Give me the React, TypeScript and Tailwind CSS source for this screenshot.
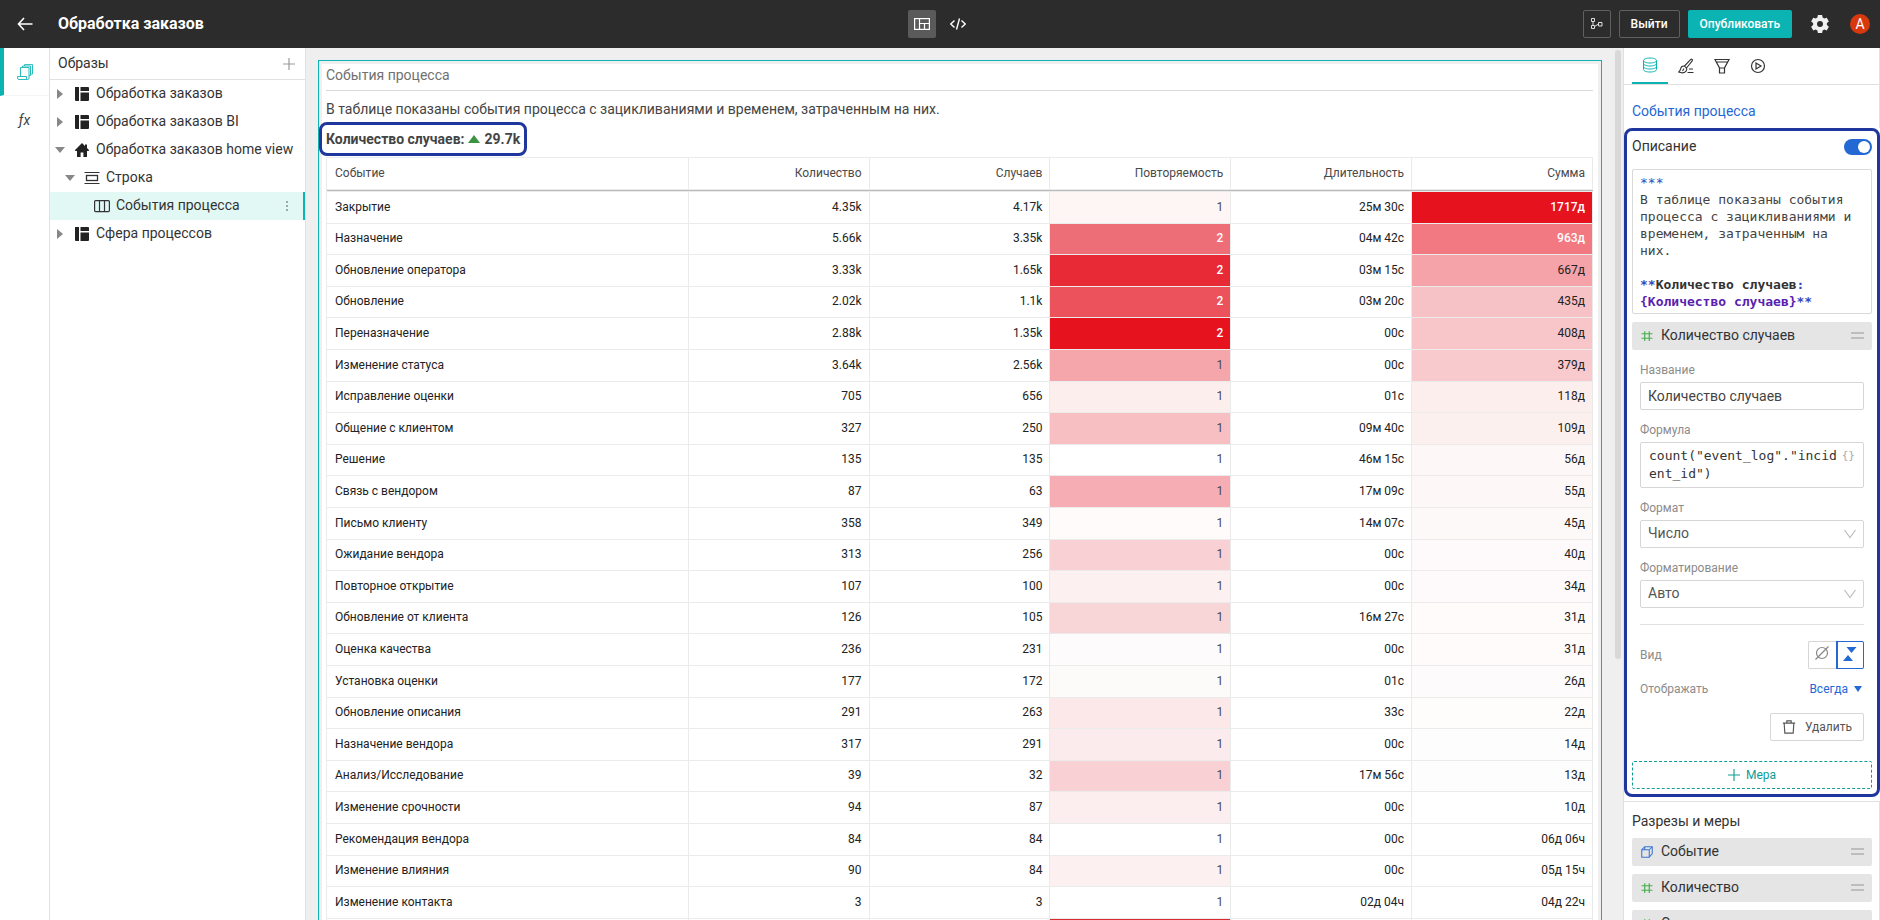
import type { ReactNode } from "react";

type Row = {
  name: string;
  count: string;
  cases: string;
  repeat: string;
  repeatTone: string;
  duration: string;
  total: string;
  totalTone: string;
};

const light = "text-[#4a4a4a]";
const strong = "font-medium text-white";

const rows: Row[] = [
  { name: "Закрытие", count: "4.35k", cases: "4.17k", repeat: "1", repeatTone: `bg-[#fef5f5] ${light}`, duration: "25м 30с", total: "1717д", totalTone: `bg-[#e6131f] ${strong}` },
  { name: "Назначение", count: "5.66k", cases: "3.35k", repeat: "2", repeatTone: `bg-[#ee6e77] ${strong}`, duration: "04м 42с", total: "963д", totalTone: `bg-[#f27981] ${strong}` },
  { name: "Обновление оператора", count: "3.33k", cases: "1.65k", repeat: "2", repeatTone: `bg-[#e82a36] ${strong}`, duration: "03м 15с", total: "667д", totalTone: "bg-[#f5a2a8]" },
  { name: "Обновление", count: "2.02k", cases: "1.1k", repeat: "2", repeatTone: `bg-[#ec525b] ${strong}`, duration: "03м 20с", total: "435д", totalTone: "bg-[#f7c2c5]" },
  { name: "Переназначение", count: "2.88k", cases: "1.35k", repeat: "2", repeatTone: `bg-[#e6131f] ${strong}`, duration: "00с", total: "408д", totalTone: "bg-[#f8c6c9]" },
  { name: "Изменение статуса", count: "3.64k", cases: "2.56k", repeat: "1", repeatTone: `bg-[#f5a6ab] ${light}`, duration: "00с", total: "379д", totalTone: "bg-[#f8cacd]" },
  { name: "Исправление оценки", count: "705", cases: "656", repeat: "1", repeatTone: `bg-[#fdeeee] ${light}`, duration: "01с", total: "118д", totalTone: "bg-[#fdeeee]" },
  { name: "Общение с клиентом", count: "327", cases: "250", repeat: "1", repeatTone: `bg-[#f7bfc2] ${light}`, duration: "09м 40с", total: "109д", totalTone: "bg-[#fcf0ef]" },
  { name: "Решение", count: "135", cases: "135", repeat: "1", repeatTone: light, duration: "46м 15с", total: "56д", totalTone: "bg-[#fdf7f7]" },
  { name: "Связь с вендором", count: "87", cases: "63", repeat: "1", repeatTone: `bg-[#f6adb4] ${light}`, duration: "17м 09с", total: "55д", totalTone: "bg-[#fdf7f7]" },
  { name: "Письмо клиенту", count: "358", cases: "349", repeat: "1", repeatTone: `bg-[#fffbfb] ${light}`, duration: "14м 07с", total: "45д", totalTone: "bg-[#fdf9f9]" },
  { name: "Ожидание вендора", count: "313", cases: "256", repeat: "1", repeatTone: `bg-[#f9d0d3] ${light}`, duration: "00с", total: "40д", totalTone: "bg-[#fefafb]" },
  { name: "Повторное открытие", count: "107", cases: "100", repeat: "1", repeatTone: `bg-[#fcf0f0] ${light}`, duration: "00с", total: "34д", totalTone: "bg-[#fefafb]" },
  { name: "Обновление от клиента", count: "126", cases: "105", repeat: "1", repeatTone: `bg-[#f8d6d8] ${light}`, duration: "16м 27с", total: "31д", totalTone: "bg-[#fffbfa]" },
  { name: "Оценка качества", count: "236", cases: "231", repeat: "1", repeatTone: `bg-[#fefbfc] ${light}`, duration: "00с", total: "31д", totalTone: "bg-[#fffbfa]" },
  { name: "Установка оценки", count: "177", cases: "172", repeat: "1", repeatTone: `bg-[#fdfafa] ${light}`, duration: "01с", total: "26д", totalTone: "bg-[#fefbfc]" },
  { name: "Обновление описания", count: "291", cases: "263", repeat: "1", repeatTone: `bg-[#fce8e9] ${light}`, duration: "33с", total: "22д", totalTone: "bg-[#fffdfc]" },
  { name: "Назначение вендора", count: "317", cases: "291", repeat: "1", repeatTone: `bg-[#fcebec] ${light}`, duration: "00с", total: "14д", totalTone: "bg-[#fefdfd]" },
  { name: "Анализ/Исследование", count: "39", cases: "32", repeat: "1", repeatTone: `bg-[#f9d1d5] ${light}`, duration: "17м 56с", total: "13д", totalTone: "bg-[#fefdfd]" },
  { name: "Изменение срочности", count: "94", cases: "87", repeat: "1", repeatTone: `bg-[#fceeef] ${light}`, duration: "00с", total: "10д", totalTone: "" },
  { name: "Рекомендация вендора", count: "84", cases: "84", repeat: "1", repeatTone: light, duration: "00с", total: "06д 06ч", totalTone: "" },
  { name: "Изменение влияния", count: "90", cases: "84", repeat: "1", repeatTone: `bg-[#fcf1f0] ${light}`, duration: "00с", total: "05д 15ч", totalTone: "" },
  { name: "Изменение контакта", count: "3", cases: "3", repeat: "1", repeatTone: light, duration: "02д 04ч", total: "04д 22ч", totalTone: "" },
  { name: "", count: "", cases: "", repeat: "", repeatTone: "bg-[#dc2a35]", duration: "", total: "", totalTone: "" },
];

function Icon({ size = 16, className = "", children }: { size?: number; className?: string; children: ReactNode }) {
  return (
    <svg width={size} height={size} viewBox="0 0 16 16" fill="none" stroke="currentColor" aria-hidden="true" className={`shrink-0 ${className}`}>
      {children}
    </svg>
  );
}

const LayoutIcon = () => (
  <Icon className="text-[#222]">
    <path d="M1 1h4v14H2a1 1 0 0 1-1-1zM6.5 1H14a1 1 0 0 1 1 1v3H6.5zM6.5 6.5H15V14a1 1 0 0 1-1 1H6.5z" fill="currentColor" stroke="none" />
  </Icon>
);

const HomeIcon = () => (
  <Icon className="text-[#222]">
    <path d="M8 1 .8 8.2l.7.8H3v6h3.6v-4.5h2.8V15H13V9h1.500l.7-.8L13 6V2.500h-2V4z" fill="currentColor" stroke="none" />
  </Icon>
);

const RowIcon = () => (
  <Icon className="text-[#333]">
    <path d="M.5 2.500h15M.5 13.500h15" strokeWidth="1.200" />
    <rect x="2.500" y="5.500" width="11" height="5" strokeWidth="1.300" />
  </Icon>
);

const TableIcon = () => (
  <Icon className="text-[#333]">
    <rect x=".6" y="2.600" width="14.800" height="11" rx="1" strokeWidth="1.200" />
    <path d="M5.500 2.500v11M10.500 2.500v11" strokeWidth="1.200" />
  </Icon>
);

const HashIcon = () => (
  <Icon size={12} className="text-[#43ad4a]">
    <path d="M5 1.500v13M11 1.500v13M.8 5h14.400M.8 11h14.400" strokeWidth="1.500" />
  </Icon>
);

const CubeIcon = () => (
  <Icon size={12} className="text-[#3a74d0]">
    <path d="M1 5h10v10H1zM1 5l4-4h10v9l-4 5M11 5l4-4M5 1v4" strokeWidth="1.400" />
  </Icon>
);

const Grip = () => (
  <svg width="13" height="8" viewBox="0 0 13 8" aria-hidden="true" className="text-[#bdbdbd]">
    <path d="M0 1h13M0 6h13" stroke="currentColor" strokeWidth="2" />
  </svg>
);

function Caret({ open }: { open?: boolean }) {
  return (
    <svg width="10" height="10" viewBox="0 0 10 10" aria-hidden="true" className="shrink-0 text-[#888]">
      <path d={open ? "M0 2h10L5 8z" : "M2 0v10l6-5z"} fill="currentColor" />
    </svg>
  );
}

function TreeRow({ indent = "pl-[5px]", open, leaf, icon, label, selected }: { indent?: string; open?: boolean; leaf?: boolean; icon: ReactNode; label: string; selected?: boolean }) {
  return (
    <li>
      <button
        type="button"
        className={`flex h-7 w-full items-center pr-[14px] text-left text-sm text-[#333] ${indent} ${selected ? "border-r-2 border-[#0cb3b3] bg-[#e1f8f5]" : ""}`}
      >
        {!leaf && <Caret open={open} />}
        <span className={`mr-[6px] ${leaf ? "" : "ml-[9px]"}`}>{icon}</span>
        <span className="flex-1 pb-0.5 whitespace-nowrap">{label}</span>
        {selected && (
          <svg width="4" height="12" viewBox="0 0 4 12" aria-hidden="true" className="text-[#9aaba9]">
            <path d="M1 1h2v2H1zM1 5h2v2H1zM1 9h2v2H1z" fill="currentColor" />
          </svg>
        )}
      </button>
    </li>
  );
}

function Chip({ icon, label }: { icon: ReactNode; label: string }) {
  return (
    <button type="button" className="flex h-7 w-full items-center rounded-xs bg-[#e5e5e5] pr-2 pl-[9px] text-left text-sm text-[#333]">
      {icon}
      <span className="ml-2 flex-1 pb-0.5">{label}</span>
      <Grip />
    </button>
  );
}

function SelectField({ id, label, value }: { id: string; label: string; value: string }) {
  return (
    <div className="mt-2.5 flex flex-col gap-0.5">
      <label htmlFor={id} className="text-[12px] leading-5 text-[#8c8c8c]">{label}</label>
      <div className="grid">
        <select id={id} defaultValue={value} className="col-start-1 row-start-1 h-7 appearance-none rounded-xs border border-[#d6d6d6] bg-white px-[7px] pb-0.5 text-sm text-[#555]">
          <option>{value}</option>
        </select>
        <svg width="12" height="10" viewBox="0 0 12 10" fill="none" aria-hidden="true" className="pointer-events-none col-start-1 row-start-1 mr-2 self-center justify-self-end text-[#bbb]">
          <path d="M.5 1 6 8.500 11.500 1" stroke="currentColor" strokeWidth="1.200" />
        </svg>
      </div>
    </div>
  );
}

function Header() {
  return (
    <header className="grid h-12 shrink-0 grid-cols-[1fr_auto_1fr] items-center bg-[#2c2c2c] text-white">
      <div className="flex items-center">
        <button type="button" aria-label="Назад" className="ml-[17px]">
          <Icon>
            <path d="M7 2 1.500 8 7 14M1.500 8H15.500" strokeWidth="1.600" />
          </Icon>
        </button>
        <h1 className="ml-[25px] text-base font-bold">Обработка заказов</h1>
      </div>
      <div className="flex items-center gap-2">
        <button type="button" aria-label="Макет" className="flex h-7 w-7 items-center justify-center rounded-xs bg-[#5a5a5a]">
          <Icon>
            <rect x=".6" y="2.600" width="14.800" height="10.800" strokeWidth="1.200" />
            <path d="M5.500 3v10M5.500 7.500h10M10.500 7.500V13" strokeWidth="1.200" />
          </Icon>
        </button>
        <button type="button" aria-label="Код" className="flex h-7 w-7 items-center justify-center">
          <Icon>
            <path d="M4.500 4.500.8 8l3.700 3.500M11.500 4.500 15.200 8l-3.700 3.500M9.500 2.500l-3 11" strokeWidth="1.400" />
          </Icon>
        </button>
      </div>
      <div className="flex items-center justify-end pr-2.5">
        <button type="button" aria-label="Связи" className="flex h-7 w-7 items-center justify-center rounded-xs border border-[#606060] pb-0.5">
          <svg width="13" height="13" viewBox="0 0 13 13" fill="none" stroke="#ddd" aria-hidden="true">
            <path d="M1.500 1.500h3v3h-3zM1.500 8.500h3v3h-3zM8.500 5.500h3.500v3.500H8.500zM3 4.500v4M4.500 9.500 8.500 7" />
          </svg>
        </button>
        <button type="button" className="ml-2 h-7 rounded-xs border border-[#606060] px-[11px] text-[12px] font-medium">Выйти</button>
        <button type="button" className="ml-2 h-7 rounded-xs bg-[#0cb3b3] px-3 text-[12px] font-medium">Опубликовать</button>
        <button type="button" aria-label="Настройки" className="ml-[19px]">
          <svg width="18" height="18" viewBox="0 0 24 24" fill="#f0f0f0" aria-hidden="true">
            <path fillRule="evenodd" d="M9.200 0h5.600l.7 3.400 2.200 1.300 3.300-1.100 2.800 4.900-2.600 2.300v2.500l2.600 2.300-2.800 4.900-3.300-1.100-2.200 1.300-.7 3.300H9.200l-.7-3.300-2.200-1.300L3 20.500.2 15.600l2.600-2.300v-2.500L.2 8.500 3 3.600l3.300 1.100 2.200-1.300zM12 8a4 4 0 1 0 0 8 4 4 0 0 0 0-8z" />
          </svg>
        </button>
        <button type="button" aria-label="Профиль" className="ml-[21px] flex h-5 w-5 items-center justify-center rounded-full bg-[#d8380e] text-sm">A</button>
      </div>
    </header>
  );
}

function Sidebar() {
  return (
    <div className="flex shrink-0">
      <nav className="flex w-[50px] flex-col border-r border-[#e2e2e2] bg-white">
        <button type="button" aria-label="Образы" className="flex h-12 items-center border-b border-l-4 border-b-[#f5f5f5] border-l-[#0cb3b3] pl-[13px] text-[#2bbcbc]">
          <Icon>
            <path d="M3.500 12.500V3.500h8.500V14a1.500 1.500 0 0 1-1.500 1.500H2A1.500 1.500 0 0 1 .6 14v-1.500h8.900V14a1.500 1.500 0 0 0 1 1.500M5.500 3.500v-1.500h8v9.500H12M7.500 2V.600h8v9.400h-2" />
          </Icon>
        </button>
        <button type="button" aria-label="Функции" className="h-12 text-sm text-[#444] italic">ƒx</button>
      </nav>
      <aside className="flex w-64 flex-col border-r border-[#e2e2e2] bg-white">
        <div className="flex h-8 shrink-0 items-center justify-between border-b border-[#e2e2e2] pr-[10px] pl-2">
          <h2 className="pb-0.5 text-sm text-[#333]">Образы</h2>
          <button type="button" aria-label="Добавить" className="text-[#999]">
            <Icon size={12}>
              <path d="M8 0v16M0 8h16" strokeWidth="1.600" />
            </Icon>
          </button>
        </div>
        <ul>
          <TreeRow icon={<LayoutIcon />} label="Обработка заказов" />
          <TreeRow icon={<LayoutIcon />} label="Обработка заказов BI" />
          <TreeRow open icon={<HomeIcon />} label="Обработка заказов home view" />
          <TreeRow indent="pl-[15px]" open icon={<RowIcon />} label="Строка" />
          <TreeRow indent="pl-11" leaf selected icon={<TableIcon />} label="События процесса" />
          <TreeRow icon={<LayoutIcon />} label="Сфера процессов" />
        </ul>
      </aside>
    </div>
  );
}

function EventsCard() {
  const first = "border-r border-b border-[#ebebeb] px-2 pb-0.5";
  const cell = "border-r border-b border-[#ebebeb] px-[7px] pb-0.5 text-right";
  const head = "h-[33px] border-t border-r border-b border-[#ebebeb] px-[7px] pb-0.5 text-right font-normal text-[#4a4a4a]";
  return (
    <article className="min-w-0 flex-1 self-start border border-[#0cb3b3] p-[3px]">
      <div className="bg-white pr-[5px] pl-1 text-[#444]">
        <h2 className="h-[27px] border-b border-[#d9d9d9] text-sm leading-[22px] text-[#707070]">События процесса</h2>
        <p className="mt-2 text-sm leading-5">В таблице показаны события процесса с зацикливаниями и временем, затраченным на них.</p>
        <p className="mt-[3px] -ml-[7px] inline-flex h-[34px] items-center rounded-lg border-[3px] border-[#1f369c] bg-white px-1 text-sm font-bold">
          Количество случаев:
          <svg width="12" height="8" viewBox="0 0 12 8" aria-hidden="true" className="mr-[5px] ml-[3px]">
            <path d="M6 0 12 8H0z" fill="#3c9442" />
          </svg>
          29.7k
        </p>
        <table className="mt-px w-full table-fixed border-separate border-spacing-0 border-l border-[#ebebeb] text-[12px]">
          <colgroup>
            <col className="w-2/7" />
            <col className="w-1/7" />
            <col className="w-1/7" />
            <col className="w-1/7" />
            <col className="w-1/7" />
            <col className="w-1/7" />
          </colgroup>
          <thead className="shadow-[0_1px_0_0_#b9b9b9]">
            <tr>
              <th scope="col" className="h-[33px] border-t border-r border-b border-[#ebebeb] px-2 pb-0.5 text-left font-normal text-[#4a4a4a]">Событие</th>
              <th scope="col" className={head}>Количество</th>
              <th scope="col" className={head}>Случаев</th>
              <th scope="col" className={head}>Повторяемость</th>
              <th scope="col" className={head}>Длительность</th>
              <th scope="col" className={head}>Сумма</th>
            </tr>
          </thead>
          <tbody className="text-[#222]">
            <tr aria-hidden="true">
              <td colSpan={6} className="h-0.5 border-b border-[#ebebeb] p-0" />
            </tr>
            {rows.map((r, i) => (
              <tr key={i} className="h-8 nth-[5n]:h-[31px] nth-[5n+3]:h-[31px]">
                <td className={first}>{r.name}</td>
                <td className={cell}>{r.count}</td>
                <td className={cell}>{r.cases}</td>
                <td className={`${cell} ${r.repeatTone}`}>{r.repeat}</td>
                <td className={cell}>{r.duration}</td>
                <td className={`${cell} ${r.totalTone}`}>{r.total}</td>
              </tr>
            ))}
          </tbody>
        </table>
      </div>
    </article>
  );
}

function Inspector() {
  const tab = "flex h-[37px] w-9 items-center justify-center border-b-2 border-transparent text-[#333]";
  return (
    <aside className="flex w-[257px] shrink-0 flex-col overflow-hidden border-l border-[#e0e0e0] bg-white">
      <div role="tablist" className="flex h-[37px] shrink-0 border-r border-b border-[#e0e0e0] pl-2">
        <button type="button" role="tab" aria-selected="true" aria-label="Данные" className="flex h-9 w-9 items-center justify-center border-b-2 border-[#0cb3b3] text-[#0cb3b3]">
          <Icon>
            <path d="M1.500 3.500c0-1.500 2.900-2.500 6.500-2.500s6.500 1 6.500 2.500S11.600 6 8 6 1.500 5 1.500 3.500v9c0 1.500 2.900 2.500 6.500 2.500s6.500-1 6.500-2.500v-9M1.500 6.500C1.500 8 4.400 9 8 9s6.500-1 6.500-2.500M1.500 9.500C1.500 11 4.400 12 8 12s6.500-1 6.500-2.500" />
          </Icon>
        </button>
        <button type="button" role="tab" aria-selected="false" aria-label="Стиль" className={tab}>
          <Icon>
            <path d="M6.500 8 12.500 1.600c1.300-1 2.500.2 1.500 1.500L8.500 10M6.500 8c-2-.3-3.500.7-3.900 2.900-.2 1.300-.7 2.300-2 3.200 2.700 1 6 .8 7.400-1 .8-1.100.9-2.200.5-3.100zM11 11h4M9.500 14.500h6M4.500 13l1.500-2.500" strokeWidth="1.100" />
          </Icon>
        </button>
        <button type="button" role="tab" aria-selected="false" aria-label="Фильтр" className={tab}>
          <Icon>
            <path d="M1 1.500h14L10.500 10v5h-5v-5zM5.500 10h5M2.300 4h11.400" strokeWidth="1.200" />
          </Icon>
        </button>
        <button type="button" role="tab" aria-selected="false" aria-label="Действия" className={tab}>
          <Icon>
            <circle cx="8" cy="8" r="6.500" strokeWidth="1.200" />
            <path d="M6 5v6l5-3z" strokeWidth="1.200" />
          </Icon>
        </button>
      </div>
      <a href="#events" className="block h-[43px] shrink-0 border-r border-[#e0e0e0] pt-4 pl-2 text-sm leading-5 text-[#2468d4]">События процесса</a>

      <section className="shrink-0 rounded-lg border-[3px] border-[#1f369c] px-[5px] pb-[5px]">
        <div className="flex h-[30px] items-center justify-between">
          <label htmlFor="description" className="text-sm text-[#333]">Описание</label>
          <input
            id="description"
            type="checkbox"
            role="switch"
            defaultChecked
            className="mt-0.5 flex h-4 w-7 appearance-none items-center justify-end rounded-full bg-[#2468d4] px-0.5 before:h-3 before:w-3 before:rounded-full before:bg-white"
          />
        </div>
        <div
          role="textbox"
          aria-multiline="true"
          aria-label="Текст описания"
          contentEditable
          suppressContentEditableWarning
          className="mt-2 h-[145px] rounded-xs border border-[#d9d9d9] px-[7px] pt-1 font-['DejaVu_Sans_Mono',monospace] text-[13px] leading-[17px] whitespace-pre-wrap text-[#444]"
        >
          <div className="text-[#3348c0]">***</div>
          <div>В таблице показаны события процесса с зацикливаниями и временем, затраченным на них.</div>
          <div>{"\u00a0"}</div>
          <div className="font-bold text-[#333]">
            <span className="text-[#3348c0]">**</span>Количество случаев<span className="text-[#3348c0]">:</span>{" "}
            <span className="text-[#5b1fb0]">{"{Количество случаев}"}</span>
            <span className="text-[#3348c0]">**</span>
          </div>
        </div>
        <div className="mt-2">
          <Chip icon={<HashIcon />} label="Количество случаев" />
        </div>

        <div className="px-2">
          <div className="mt-2.5 flex flex-col gap-0.5">
            <label htmlFor="name" className="text-[12px] leading-5 text-[#8c8c8c]">Название</label>
            <input id="name" defaultValue="Количество случаев" className="h-7 rounded-xs border border-[#d6d6d6] px-[7px] text-sm text-[#444]" />
          </div>
          <div className="mt-2.5 flex flex-col gap-0.5">
            <label htmlFor="formula" className="text-[12px] leading-5 text-[#8c8c8c]">Формула</label>
            <div className="flex h-[46px] rounded-xs border border-[#d6d6d6] pt-1 pr-2 pl-2">
              <textarea
                id="formula"
                rows={2}
                defaultValue={'count("event_log"."incident_id")'}
                className="h-9 min-w-0 flex-1 resize-none overflow-hidden font-['DejaVu_Sans_Mono',monospace] text-[13px] leading-[18px] break-all text-[#333]"
              />
              <button type="button" aria-label="Вставить" className="h-[18px] w-4 text-right font-['DejaVu_Sans_Mono',monospace] text-[11px] text-[#aaa]">{"{}"}</button>
            </div>
          </div>
          <SelectField id="format" label="Формат" value="Число" />
          <SelectField id="formatting" label="Форматирование" value="Авто" />
          <hr className="mt-4 border-[#e2e2e2]" />
          <div className="mt-4 flex items-center justify-between">
            <span className="text-[12px] text-[#8c8c8c]">Вид</span>
            <div className="flex">
              <button type="button" aria-label="Без вида" className="flex h-7 w-7 items-center justify-center rounded-l-xs border border-r-0 border-[#d6d6d6] pr-px pb-1 text-[#888]">
                <Icon>
                  <circle cx="8" cy="8" r="5.500" strokeWidth="1.200" />
                  <path d="M1.500 14.500 14.500 1.500" strokeWidth="1.200" />
                </Icon>
              </button>
              <button type="button" aria-label="Тренд" className="flex h-7 w-7 items-center justify-center rounded-r-xs border border-l-2 border-[#2468d4] pr-0.5 pb-0.5 text-[#2468d4]">
                <Icon>
                  <path d="M4.500 1h10l-5 6zM1 15h10L6 9z" fill="currentColor" stroke="none" />
                </Icon>
              </button>
            </div>
          </div>
          <div className="mt-2.5 flex h-5 items-center justify-between text-[12px]">
            <span className="text-[#8c8c8c]">Отображать</span>
            <button type="button" className="flex items-center gap-[6px] pr-0.5 text-[#2468d4]">
              Всегда
              <svg width="8" height="6" viewBox="0 0 8 6" aria-hidden="true">
                <path d="M0 0h8L4 6z" fill="currentColor" />
              </svg>
            </button>
          </div>
          <div className="mt-3.5 flex justify-end">
            <button type="button" className="flex h-7 items-center gap-[9px] rounded-xs border border-[#d6d6d6] px-[11px] text-[12px] text-[#555]">
              <Icon size={14}>
                <path d="M1 3.500h14M5.500 3V1h5v2M2.500 4l.7 11h9.600l.7-11" strokeWidth="1.300" />
              </Icon>
              Удалить
            </button>
          </div>
        </div>
        <button type="button" className="mt-5 flex h-7 w-full items-center justify-center gap-[6px] rounded-xs border border-dashed border-[#109c96] text-[12px] text-[#109c96]">
          <Icon size={12}>
            <path d="M8 0v16M0 8h16" strokeWidth="1.500" />
          </Icon>
          Мера
        </button>
      </section>

      <section className="mt-1 flex shrink-0 flex-col gap-2 border-t border-r border-[#e0e0e0] pt-[10px] pr-[7px] pl-2">
        <h3 className="text-sm leading-[18px] text-[#333]">Разрезы и меры</h3>
        <Chip icon={<CubeIcon />} label="Событие" />
        <Chip icon={<HashIcon />} label="Количество" />
        <Chip icon={<HashIcon />} label="Случаев" />
      </section>
    </aside>
  );
}

export default function App() {
  return (
    <div className="flex h-screen flex-col overflow-hidden bg-[#efefef] font-[Roboto,sans-serif]">
      <Header />
      <div className="flex min-h-0 flex-1">
        <Sidebar />
        <main className="flex min-w-0 flex-1 overflow-hidden pl-3">
          <div className="flex min-w-0 flex-1 pt-3">
            <EventsCard />
          </div>
          <div className="mr-0.5 ml-[13px] flex w-1.5 flex-col pt-0.5">
            <div className="h-7/10 rounded-full bg-[#d8d8d8]" />
          </div>
        </main>
        <Inspector />
      </div>
    </div>
  );
}
